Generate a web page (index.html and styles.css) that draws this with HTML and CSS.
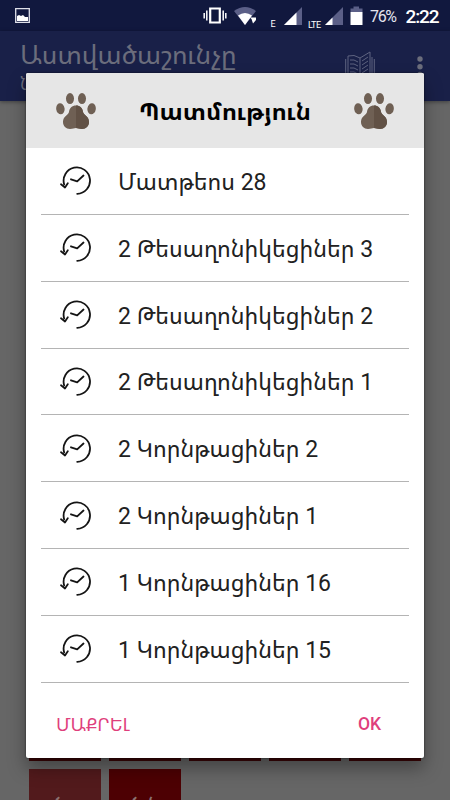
FILE: index.html
```
<!DOCTYPE html>
<html lang="hy">
<head>
    <meta charset="UTF-8">
    <meta name="viewport" content="width=device-width, initial-scale=1.0">
    <title>Պատմություն</title>
    <link rel="stylesheet" href="styles.css">
</head>
<body>
    <svg class="defs" width="0" height="0">
        <symbol id="paw" viewBox="0 0 40 36">
            <ellipse cx="4.4" cy="15.800" rx="4.200" ry="5.500" transform="rotate(-8 4.4 15.8)"/>
            <ellipse cx="14" cy="5.600" rx="4" ry="5.500"/>
            <ellipse cx="26" cy="5.600" rx="4" ry="5.500"/>
            <ellipse cx="35.600" cy="15.800" rx="4.200" ry="5.500" transform="rotate(8 35.6 15.8)"/>
            <path d="M20 12.500C16 12.500 13.500 15 13 19C12.500 22 7 23 7 29C7 33 10 36 14 36C17 36 18 35 20 35C22 35 23 36 26 36C30 36 33 33 33 29C33 23 27.500 22 27 19C26.500 15 24 12.500 20 12.500Z"/>
            <path class="paw-dark" d="M20 12.500C24 12.500 26.500 15 27 19C27.500 22 33 23 33 29C33 33 30 36 26 36C23 36 22 35 20 35Z"/>
        </symbol>
        <symbol id="history" viewBox="0 0 32 30">
            <path d="M4.200 18.500A13.200 13.200 0 1 1 17.200 27.800M1 18.300L5 21.500L7.800 17.300M11 13.300L17.200 15.400L23.500 9.500"/>
        </symbol>
    </svg>

    <div class="screen">
        <div class="status-bar">
            <svg width="450" height="31" viewBox="0 0 450 31">
                <path d="M15.700 8.700H29.300V22.300H15.700Z" fill="none" stroke="#dfe0ea" stroke-width="1.300"/>
                <path d="M17 21V16L19 15L21 16L23 15L25 17L28 17V21Z" fill="#fff"/>
                <path d="M210.200 8.500H219.800V22.500H210.200Z" fill="none" stroke="#fff" stroke-width="2.200"/>
                <path d="M206.800 10.500V20.500M204.200 13V18.500M223.200 10.500V20.500M225.800 13V18.500" stroke="#fff" stroke-width="1.500"/>
                <path d="M234 11Q245 3 256 11L245 25Z" fill="#5b5f87"/>
                <path d="M238 15.500Q245 10.500 252 15.500L245 25Z" fill="#fff"/>
                <path d="M250 17.500H256V20L253 23.500L251.500 19Z" fill="#fff"/>
                <path d="M302 7V25H284Z" fill="#5b5f87"/>
                <path d="M296.500 12.500V25H284Z" fill="#fff"/>
                <path d="M343 7V25H325Z" fill="#5b5f87"/>
                <path d="M332.500 17.500V25H325Z" fill="#fff"/>
                <path d="M350.500 8.500H353.500V6.500H359V8.500H362.500V12H350.500Z" fill="#5b5f87"/>
                <path d="M350.500 12H362.500V25H350.500Z" fill="#fff"/>
                <text class="net" x="270.500" y="26.500">E</text>
                <text class="net" x="308" y="28" textLength="13">LTE</text>
                <text class="battery" x="370" y="21.700" textLength="27">76%</text>
                <text class="clock" x="405.500" y="22.700" textLength="34">2:22</text>
            </svg>
        </div>
        <div class="app-bar">
            <div class="titles">
                <div class="app-title">Աստվածաշունչը</div>
                <div class="app-subtitle">Նոր</div>
            </div>
            <svg class="book" width="30" height="30" viewBox="0 0 30 30">
                <path d="M15 7Q9 3 3 5V27Q9 25 15 29L25 24V1L15 7V29M.7 8V29M27 6V29M29.300 8V29M5 9Q9 8 13 11M5 13Q9 12 13 15M5 17Q9 16 13 19M5 21Q9 20 13 23M17 10L23 6M17 14L23 10M17 18L23 14M17 22L23 18"/>
            </svg>
            <svg class="more" width="6" height="24" viewBox="0 0 6 24">
                <circle cx="3" cy="3" r="2.700"/>
                <circle cx="3" cy="10.700" r="2.700"/>
                <circle cx="3" cy="18.400" r="2.700"/>
            </svg>
        </div>
        <div class="books">
            <div class="tile"></div>
            <div class="tile"></div>
            <div class="tile"></div>
            <div class="tile"></div>
            <div class="tile"></div>
            <div class="tile light">ծո</div>
            <div class="tile red">ծ ն</div>
        </div>
    </div>

    <div class="dialog">
        <div class="dialog-header">
            <svg class="paw"><use href="#paw"/></svg>
            <h1>Պատմություն</h1>
            <svg class="paw"><use href="#paw"/></svg>
        </div>
        <ul class="history">
            <li><svg><use href="#history"/></svg><span>Մատթեոս 28</span></li>
            <li><svg><use href="#history"/></svg><span>2 Թեսաղոնիկեցիներ 3</span></li>
            <li><svg><use href="#history"/></svg><span>2 Թեսաղոնիկեցիներ 2</span></li>
            <li><svg><use href="#history"/></svg><span>2 Թեսաղոնիկեցիներ 1</span></li>
            <li><svg><use href="#history"/></svg><span>2 Կորնթացիներ 2</span></li>
            <li><svg><use href="#history"/></svg><span>2 Կորնթացիներ 1</span></li>
            <li><svg><use href="#history"/></svg><span>1 Կորնթացիներ 16</span></li>
            <li><svg><use href="#history"/></svg><span>1 Կորնթացիներ 15</span></li>
        </ul>
        <div class="actions">
            <button class="clear">ՄԱՔՐԵԼ</button>
            <button class="ok">OK</button>
        </div>
    </div>
</body>
</html>
```

FILE: styles.css
```
* {
    box-sizing: border-box;
}
body {
    margin: 0;
    width: 450px;
    height: 800px;
    overflow: hidden;
    position: relative;
    background: #666;
    font-family: Roboto, "Noto Sans Armenian", "DejaVu Sans", sans-serif;
}
.defs {
    position: absolute;
}
.screen {
    height: 800px;
    overflow: hidden;
    display: flex;
    flex-direction: column;
}
.status-bar {
    height: 31px;
    flex: none;
    background: #11183e;
}
.status-bar svg {
    display: block;
}
.net {
    font-size: 9px;
    fill: #fff;
}
.battery {
    font-size: 16px;
    fill: #e4e5ee;
}
.clock {
    font-size: 19px;
    font-weight: 500;
    fill: #fff;
}
.app-bar {
    height: 70px;
    flex: none;
    display: flex;
    background: #192048;
    color: #6b6d7c;
    padding: 8px 27px 0 20px;
    overflow: hidden;
    box-shadow: 0 1px 4px rgba(0,0,0,0.4);
}
.titles {
    flex: 1;
    white-space: nowrap;
}
.app-title {
    font-size: 26.2px;
    line-height: 32px;
}
.app-subtitle {
    font-size: 17px;
    line-height: 26px;
}
.book {
    margin: 12px 42px 0 0;
    fill: none;
    stroke: #5e6380;
}
.more {
    margin-top: 17px;
    fill: #6b6d7c;
}
.books {
    flex: 1;
    display: grid;
    grid-template-columns: repeat(5, 72px);
    grid-template-rows: 72px 72px;
    gap: 8px;
    padding: 588px 0 0 29px;
}
.tile {
    background: #3a0506;
    color: #8b7070;
    font-size: 24px;
    text-align: center;
    padding-top: 20px;
}
.light {
    background: #521a1c;
}
.red {
    background: #4d0003;
}
.dialog {
    position: absolute;
    left: 26px;
    top: 73px;
    width: 398px;
    height: 685px;
    display: flex;
    flex-direction: column;
    background: #fff;
    border-radius: 2px;
    overflow: hidden;
    box-shadow: 0 0 2px rgba(0,0,0,0.7), 0 10px 18px rgba(0,0,0,0.35);
}
.dialog-header {
    height: 75px;
    display: flex;
    align-items: center;
    justify-content: space-between;
    padding: 0 30px;
    background: #e6e6e6;
}
.dialog-header h1 {
    margin: 0;
    font-size: 24px;
    font-weight: bold;
    white-space: nowrap;
}
.paw {
    width: 40px;
    height: 36px;
    fill: #6f6054;
}
.paw-dark {
    fill: #615145;
}
.history {
    list-style: none;
    margin: 0;
    padding: 0 15px;
}
.history li {
    height: 66.85px;
    display: flex;
    align-items: center;
    border-bottom: 1px solid #b4b4b4;
    font-size: 23px;
    color: #212121;
    white-space: nowrap;
}
.history svg {
    width: 32px;
    height: 30px;
    margin: 1px 26px 0 19px;
    fill: none;
    stroke: #151515;
    stroke-width: 1.8;
    stroke-linecap: round;
    stroke-linejoin: round;
}
.actions {
    flex: 1;
    display: flex;
    justify-content: space-between;
    align-items: center;
    padding: 7px 43px 0 30px;
}
button {
    border: none;
    padding: 0;
    background: none;
    font-family: inherit;
    font-size: 17.5px;
    color: #df3f7c;
}
.clear {
    font-size: 18.5px;
}
.ok {
    font-weight: 500;
}
```
